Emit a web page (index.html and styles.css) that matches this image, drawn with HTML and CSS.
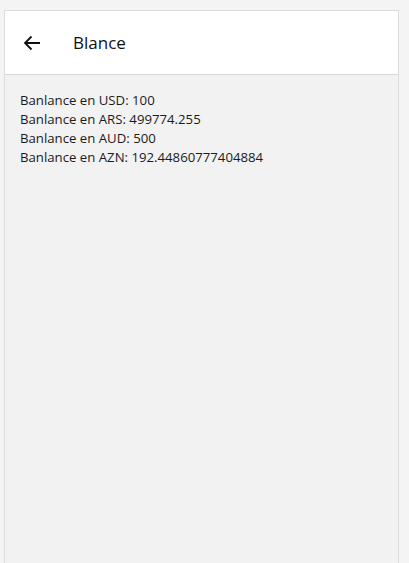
FILE: index.html
```html
<!DOCTYPE html>
<html>
<head>
<meta charset="utf-8">
<link rel="stylesheet" href="styles.css">
</head>
<body>
<div class="frame">
  <header class="bar">
    <button class="back" aria-label="Back">
      <svg width="18" height="16" viewBox="0 0 18 16"><path d="M17 8H2M8.5 1.5L2 8l6.5 6.5" fill="none" stroke="#111" stroke-width="1.8"/></svg>
    </button>
    <h1 class="title">Blance</h1>
  </header>
  <main class="content">
    <p>Banlance en USD: 100</p>
    <p>Banlance en ARS: 499774.255</p>
    <p>Banlance en AUD: 500</p>
    <p>Banlance en AZN: 192.44860777404884</p>
  </main>
</div>
</body>
</html>
```
FILE: styles.css
```css
html, body { margin: 0; height: 100%; }
body {
  background: #f3f4f3;
  font-family: "Open Sans", "Noto Sans", sans-serif;
  color: #1b1b1b;
  padding: 10px 10px 0 4px;
  box-sizing: border-box;
  overflow: hidden;
}
.frame {
  height: 100%;
  border: 1px solid #dcdcdc;
  border-bottom: none;
  background: #f2f2f2;
  display: flex;
  flex-direction: column;
}
.bar {
  height: 63px;
  background: #fff;
  border-bottom: 1px solid #d6d6d6;
  display: flex;
  align-items: center;
  padding-left: 18px;
}
.back {
  border: 0;
  background: none;
  padding: 0;
  width: 18px;
  height: 16px;
  display: flex;
}
.title {
  margin: 0 0 0 32px;
  font-size: 17px;
  font-weight: 400;
  color: #111;
}
.content {
  padding: 16px 15px;
  font-size: 13.2px;
}
.content p { margin: 0; line-height: 19px; }
```
